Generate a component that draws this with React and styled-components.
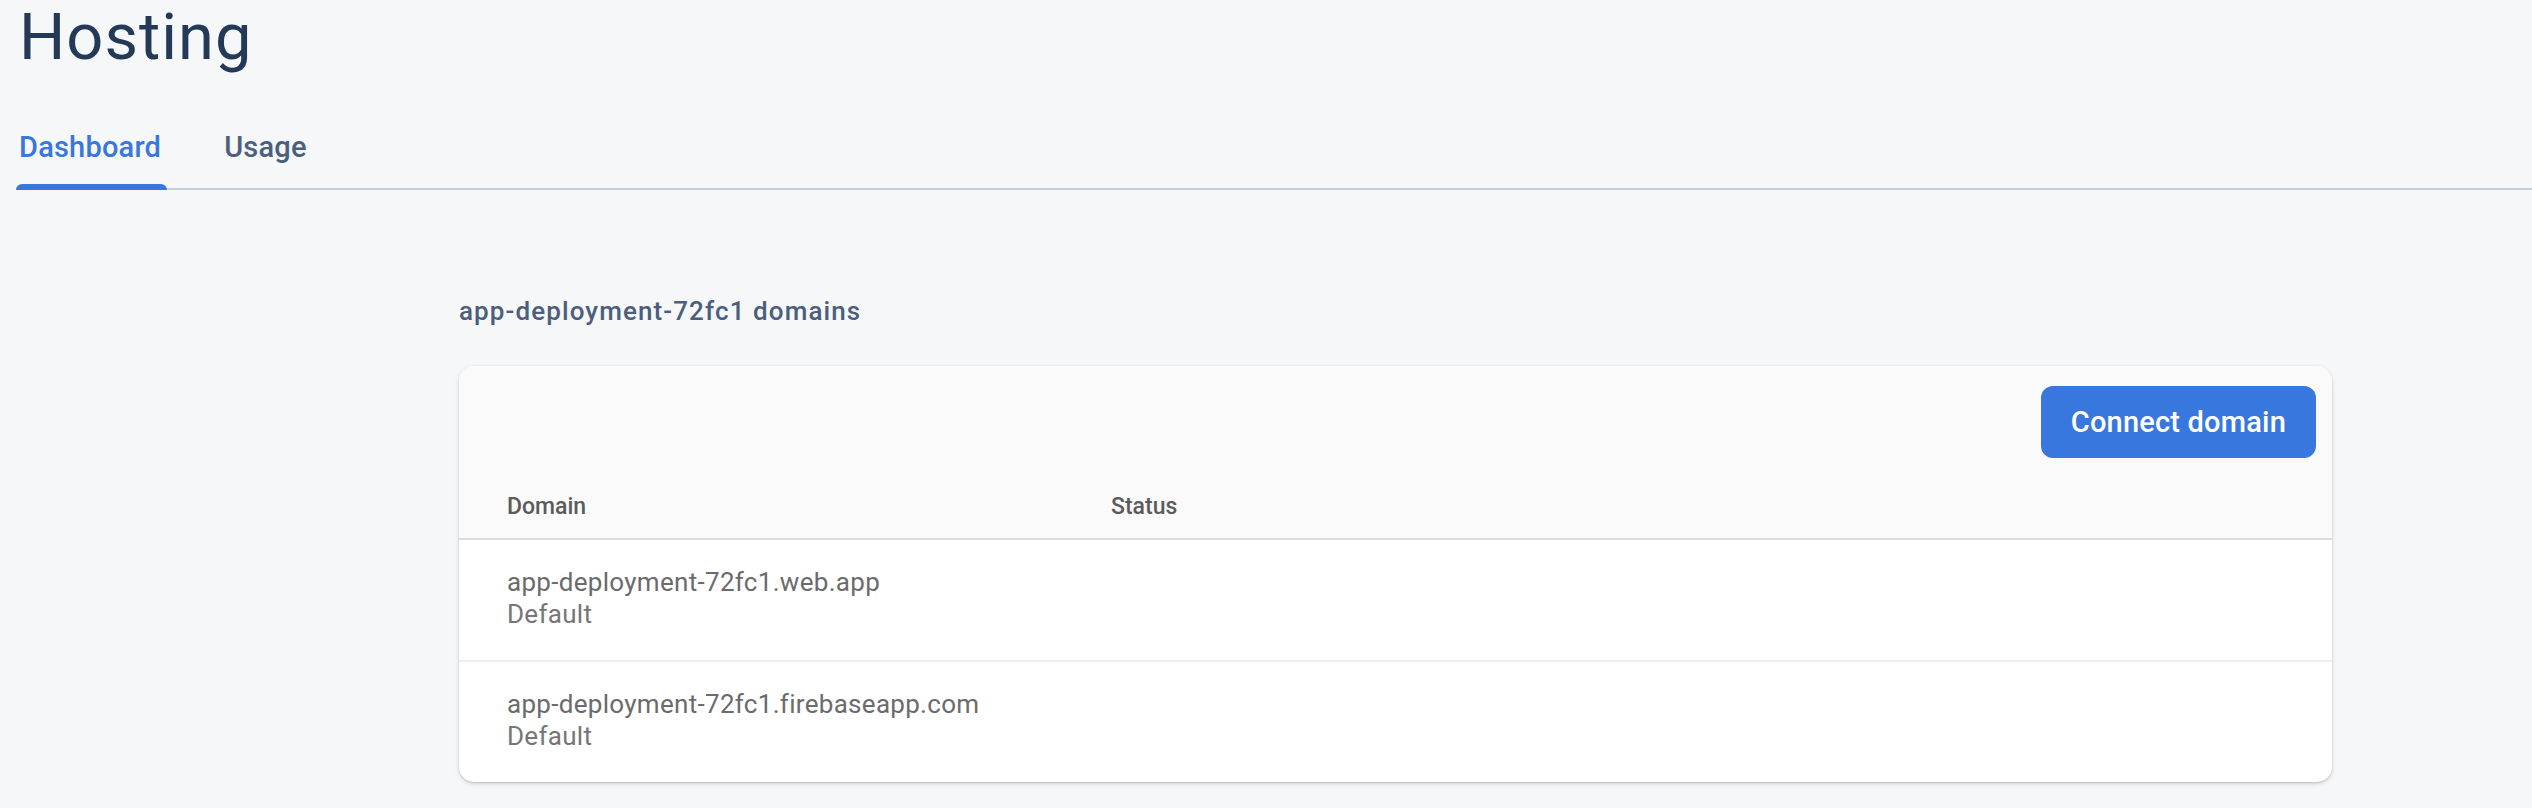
import React from "react";
import styled, { createGlobalStyle } from "styled-components";

const GlobalStyle = createGlobalStyle`
  html, body {
    margin: 0;
    padding: 0;
    background: #f6f7f9;
  }
  body {
    font-family: Roboto, "Liberation Sans", Arial, sans-serif;
    -webkit-font-smoothing: antialiased;
  }
  * { box-sizing: border-box; }
`;

const Page = styled.div`
  min-height: 808px;
  padding: 0 0 0 16px;
  background: #f6f7f9;
`;

const Title = styled.h1`
  margin: 0;
  padding-left: 3px;
  font-family: Roboto, "Liberation Sans", sans-serif;
  font-size: 65px;
  line-height: 74px;
  font-weight: 400;
  letter-spacing: 1px;
  color: #233955;
`;

const TabBar = styled.nav`
  display: flex;
  gap: 54px;
  border-bottom: 2px solid #c6ced9;
`;

const Tab = styled.button`
  position: relative;
  border: 0;
  background: transparent;
  padding: 57px 6px 25px 3px;
  font-family: Roboto, "Liberation Sans", sans-serif;
  font-size: 29px;
  line-height: 32px;
  font-weight: 500;
  letter-spacing: 0.2px;
  color: ${(p) => (p.$active ? "#3877db" : "#4b5f7e")};
  cursor: pointer;

  &::after {
    content: "";
    display: ${(p) => (p.$active ? "block" : "none")};
    position: absolute;
    left: 0;
    right: 0;
    bottom: -2px;
    height: 6px;
    border-radius: 6px 6px 0 0;
    background: #3877db;
  }
`;

const Section = styled.section`
  padding: 105px 200px 0 443px;
`;

const Heading = styled.h2`
  margin: 0 0 39px;
  font-family: Roboto, "Liberation Sans", sans-serif;
  font-size: 26px;
  line-height: 32px;
  font-weight: 500;
  letter-spacing: 1.1px;
  color: #4b5e7c;
`;

const Card = styled.div`
  background: #ffffff;
  border-radius: 15px;
  overflow: hidden;
  box-shadow: 0 1px 2px rgba(60, 64, 67, 0.22), 0 2px 5px rgba(60, 64, 67, 0.14);
`;

const CardTop = styled.div`
  background: #fafafa;
  border-bottom: 2px solid #dcdcdc;
`;

const Toolbar = styled.div`
  display: flex;
  justify-content: flex-end;
  padding: 20px 16px 0;
`;

const PrimaryButton = styled.button`
  height: 72px;
  padding: 0 30px;
  border: 0;
  border-radius: 12px;
  background: #3877de;
  color: #ffffff;
  font-family: Roboto, "Liberation Sans", sans-serif;
  font-size: 29px;
  font-weight: 500;
  letter-spacing: 0.2px;
  cursor: pointer;
`;

const Row = styled.div`
  display: grid;
  grid-template-columns: 604px 1fr;
  padding: ${(p) => (p.$header ? "37px 48px 19px" : "26px 48px 30px")};
  border-bottom: ${(p) => (p.$last || p.$header ? "0" : "2px solid #eeeeee")};
`;

const HeaderCell = styled.div`
  font-family: Roboto, "Liberation Sans", sans-serif;
  font-size: 23px;
  line-height: 24px;
  font-weight: 500;
  color: #5b5b5b;
`;

const Cell = styled.div`
  display: flex;
  flex-direction: column;
  font-family: Roboto, "Liberation Sans", sans-serif;
  font-size: 26px;
  line-height: 32px;
  letter-spacing: 0.3px;
`;

const DomainName = styled.span`
  color: #6b6b6b;
`;

const DomainNote = styled.span`
  color: #767676;
`;

const domains = [
  { name: "app-deployment-72fc1.web.app", note: "Default" },
  { name: "app-deployment-72fc1.firebaseapp.com", note: "Default" },
];

export default function App() {
  return (
    <>
      <GlobalStyle />
      <Page>
        <Title>Hosting</Title>
        <TabBar>
          <Tab $active>Dashboard</Tab>
          <Tab>Usage</Tab>
        </TabBar>
        <Section>
          <Heading>app-deployment-72fc1 domains</Heading>
          <Card>
            <CardTop>
              <Toolbar>
                <PrimaryButton>Connect domain</PrimaryButton>
              </Toolbar>
              <Row $header>
                <HeaderCell>Domain</HeaderCell>
                <HeaderCell>Status</HeaderCell>
              </Row>
            </CardTop>
            {domains.map((d, i) => (
              <Row key={d.name} $last={i === domains.length - 1}>
                <Cell>
                  <DomainName>{d.name}</DomainName>
                  <DomainNote>{d.note}</DomainNote>
                </Cell>
                <Cell />
              </Row>
            ))}
          </Card>
        </Section>
      </Page>
    </>
  );
}
